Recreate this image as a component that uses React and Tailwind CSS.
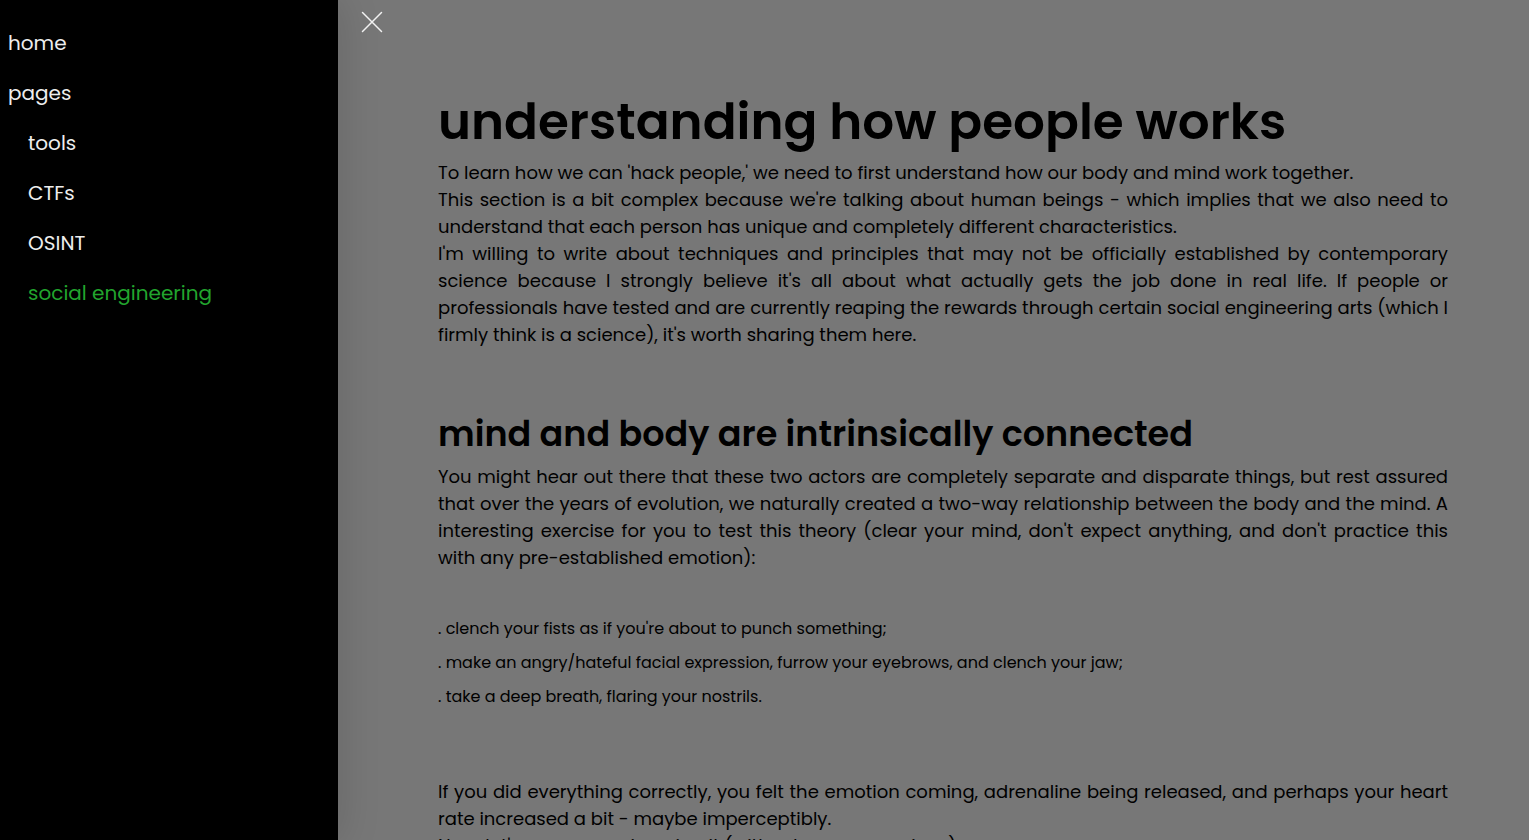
import React from "react";

const links = [
  { label: "home" },
  { label: "pages" },
  { label: "tools", nested: true },
  { label: "CTFs", nested: true },
  { label: "OSINT", nested: true },
  { label: "social engineering", nested: true, active: true },
];

function Sidebar() {
  return (
    <aside className="z-10 w-[338px] shrink-0 bg-black pt-[18px] shadow-[0_0_40px_rgba(0,0,0,0.15)]">
      <nav aria-label="Main">
        <ul>
          {links.map((link) => (
            <li key={link.label} className={link.nested ? "pl-7" : "pl-2"}>
              <a
                href="#"
                aria-current={link.active ? "page" : undefined}
                className={
                  "block text-[20px] leading-[50px] " +
                  (link.active ? "text-[#22a52e]" : "text-[#ededed]")
                }
              >
                {link.label}
              </a>
            </li>
          ))}
        </ul>
      </nav>
    </aside>
  );
}

export default function App() {
  return (
    <div className="flex h-screen overflow-hidden bg-[#777777] font-['Poppins','Inter',sans-serif] text-black antialiased">
      <Sidebar />
      <main className="relative min-w-0 flex-1 pr-[81px] pl-[100px]">
        <button
          type="button"
          aria-label="Close menu"
          className="absolute top-2.5 left-[22px] z-20 flex size-6 items-center justify-center"
        >
          <svg
            viewBox="0 0 24 24"
            className="size-6"
            fill="none"
            stroke="#f2f2f2"
            strokeWidth="1.5"
            strokeLinecap="round"
          >
            <path d="M2.5 2.5 21.5 21.5M21.5 2.5 2.5 21.5" />
          </svg>
        </button>

        <section className="pt-[84px]">
          <h1 className="text-[50px] leading-[75px] font-semibold">
            understanding how people works
          </h1>
          <p className="text-justify text-[18px] leading-[27px]">
            To learn how we can 'hack people,' we need to first understand how our body and mind work together.
            <br />
            This section is a bit complex because we're talking about human beings - which implies that we also need to
            understand that each person has unique and completely different characteristics.
            <br />
            I'm willing to write about techniques and principles that may not be officially established by contemporary
            science because I strongly believe it's all about what actually gets the job done in real life. If people or
            professionals have tested and are currently reaping the rewards through certain social engineering arts
            (which I firmly think is a science), it's worth sharing them here.
          </p>
        </section>

        <section className="pt-[60px]">
          <h2 className="pb-[3px] text-[35px] leading-[52px] font-semibold">
            mind and body are intrinsically connected
          </h2>
          <p className="text-justify text-[18px] leading-[27px]">
            You might hear out there that these two actors are completely separate and disparate things, but rest
            assured that over the years of evolution, we naturally created a two-way relationship between the body and
            the mind. A interesting exercise for you to test this theory (clear your mind, don't expect anything, and
            don't practice this with any pre-established emotion):
          </p>
          <ul className="flex flex-col gap-2.5 pt-[46px] pb-[45px] text-[16px] leading-6">
            <li>. clench your fists as if you're about to punch something;</li>
            <li>. make an angry/hateful facial expression, furrow your eyebrows, and clench your jaw;</li>
            <li>. take a deep breath, flaring your nostrils.</li>
          </ul>
          <p className="pt-6 text-justify text-[18px] leading-[27px]">
            If you did everything correctly, you felt the emotion coming, adrenaline being released, and perhaps your
            heart rate increased a bit - maybe imperceptibly.
            <br />
            Now, let's reverse engineering it (without any expressions)
          </p>
        </section>
      </main>
    </div>
  );
}
